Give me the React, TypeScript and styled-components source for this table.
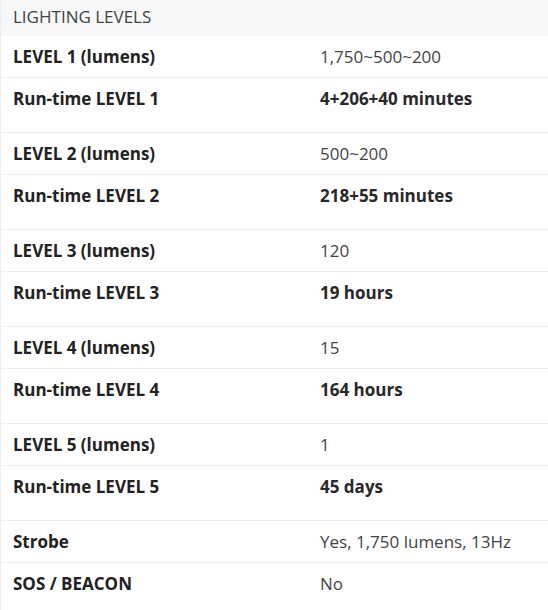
import styled, { createGlobalStyle } from 'styled-components';

const GlobalStyle = createGlobalStyle`
  body {
    margin: 0;
    background: #ffffff;
    font-family: "Open Sans", "Liberation Sans", sans-serif;
  }
`;

const specs = [
  { label: 'LEVEL 1 (lumens)', value: '1,750~500~200' },
  { label: 'Run-time LEVEL 1', value: '4+206+40 minutes', runtime: true },
  { label: 'LEVEL 2 (lumens)', value: '500~200' },
  { label: 'Run-time LEVEL 2', value: '218+55 minutes', runtime: true },
  { label: 'LEVEL 3 (lumens)', value: '120' },
  { label: 'Run-time LEVEL 3', value: '19 hours', runtime: true },
  { label: 'LEVEL 4 (lumens)', value: '15' },
  { label: 'Run-time LEVEL 4', value: '164 hours', runtime: true },
  { label: 'LEVEL 5 (lumens)', value: '1' },
  { label: 'Run-time LEVEL 5', value: '45 days', runtime: true },
  { label: 'Strobe', value: 'Yes, 1,750 lumens, 13Hz' },
  { label: 'SOS / BEACON', value: 'No' },
];

const Table = styled.section`
  width: 548px;
  border-left: 1px solid #eeeeee;
  box-sizing: border-box;
`;

const Heading = styled.div`
  height: 36px;
  box-sizing: border-box;
  padding: 5px 12px 7px;
  background: #f7f8fa;
  color: #444444;
  font-size: 17px;
  line-height: 24px;
`;

const Row = styled.div<{ $runtime?: boolean }>`
  display: grid;
  grid-template-columns: 307px 1fr;
  border-bottom: 1px solid #eeeeee;
  padding: ${({ $runtime }) => ($runtime ? '9px 0 21px' : '9px 0 8px')};
  font-size: 17px;
  line-height: 24px;

  &:last-child {
    border-bottom: none;
    padding-bottom: 16px;
  }
`;

const Label = styled.div`
  padding: 0 12px;
  color: #222222;
  font-weight: 700;
`;

const Value = styled.div<{ $bold?: boolean }>`
  padding: 0 12px;
  color: ${({ $bold }) => ($bold ? '#282828' : '#444444')};
  font-weight: ${({ $bold }) => ($bold ? 700 : 400)};
`;

const App = () => (
  <>
    <GlobalStyle />
    <Table>
      <Heading>LIGHTING LEVELS</Heading>
      {specs.map(spec => (
        <Row key={spec.label} $runtime={spec.runtime}>
          <Label>{spec.label}</Label>
          <Value $bold={spec.runtime}>{spec.value}</Value>
        </Row>
      ))}
    </Table>
  </>
);

export default App;
